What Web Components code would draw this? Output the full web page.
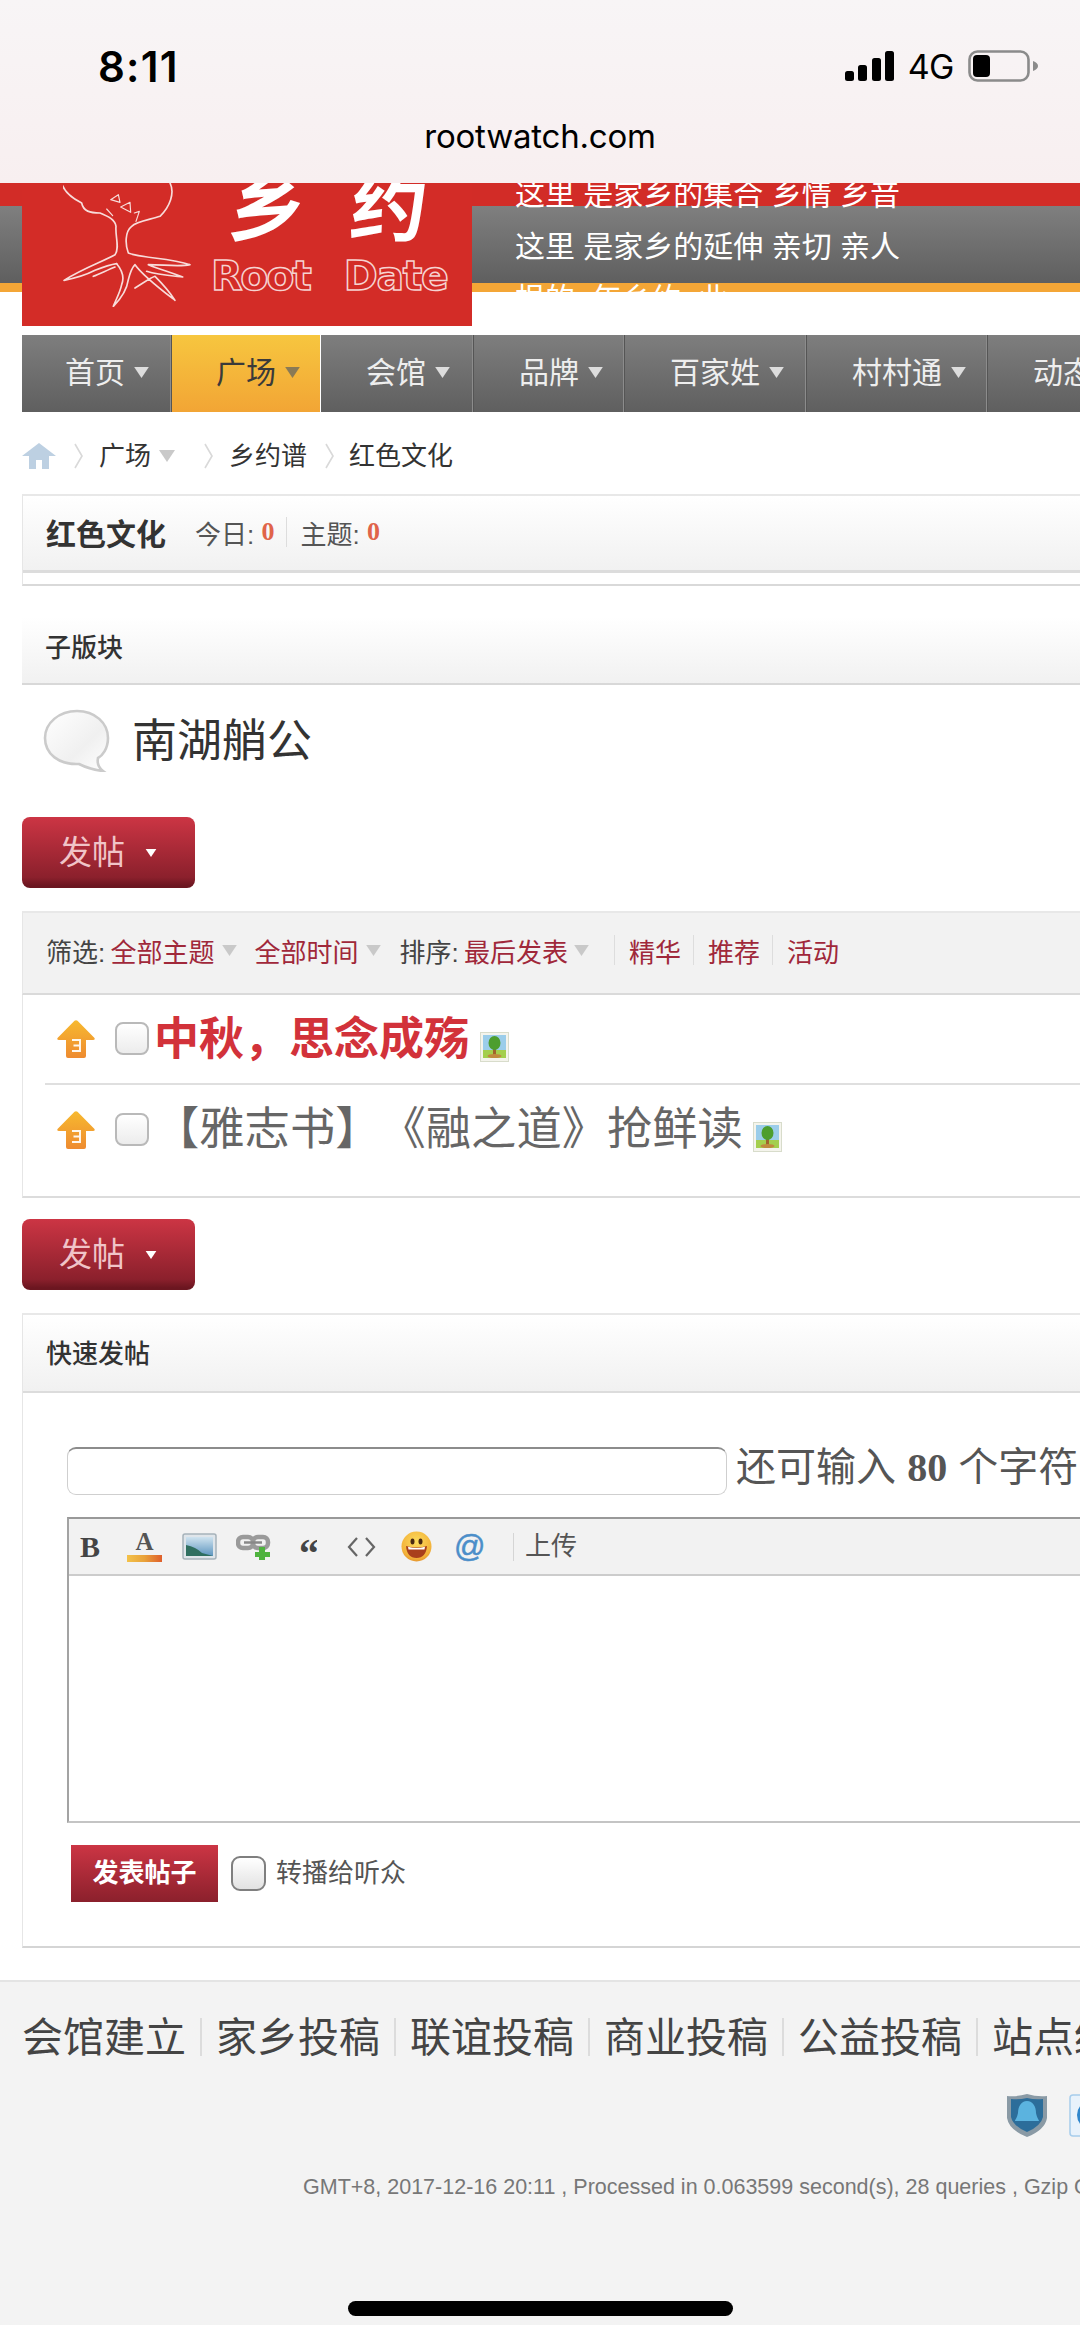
<!DOCTYPE html>
<html lang="zh">
<head>
<meta charset="utf-8">
<title>红色文化</title>
<style>
html,body{margin:0;padding:0;width:1080px;height:2339px;overflow:hidden;background:#fff}
body{font-family:"Liberation Sans","Noto Sans CJK SC",sans-serif;color:#333;text-spacing-trim:space-all}
</style>
</head>
<body>
<status-bar></status-bar>
<site-header></site-header>
<site-nav>
  <nav-item style="width:150px;padding-left:43px">首页</nav-item>
  <nav-item style="width:149px;padding-left:44px" active>广场</nav-item>
  <nav-item style="width:153px">会馆</nav-item>
  <nav-item style="width:151px">品牌</nav-item>
  <nav-item style="width:182px">百家姓</nav-item>
  <nav-item style="width:181px">村村通</nav-item>
  <nav-item style="width:150px">动态</nav-item>
</site-nav>
<bread-crumbs></bread-crumbs>
<forum-head></forum-head>
<sub-forums></sub-forums>
<post-button style="margin-top:45px"></post-button>
<thread-list></thread-list>
<post-button style="margin-top:21px"></post-button>
<quick-post></quick-post>
<site-footer></site-footer>

<script>
const CJK='"Liberation Sans","Noto Sans CJK SC",sans-serif';
function def(name,html,setup){
  customElements.define(name,class extends HTMLElement{
    constructor(){super();const s=this.attachShadow({mode:'open'});s.innerHTML=html;if(setup)setup(s,this)}
  });
}
const caret=(w,h,c,ml)=>`<svg width="${w}" height="${h}" viewBox="0 0 16 12" style="flex:none;margin-left:${ml||0}px"><path d="M0 0H16L8 12Z" fill="${c}"/></svg>`;
const chev=`<svg width="9" height="26" viewBox="0 0 9 26" style="flex:none"><path d="M1 1Q5 8 8 13Q5 18 1 25" fill="none" stroke="#d9d9d9" stroke-width="1.6"/></svg>`;
const upArrow=`<svg width="38" height="38" viewBox="0 0 38 38" style="flex:none"><defs><linearGradient id="ua" x1="0" y1="0" x2="0" y2="1"><stop offset="0" stop-color="#f7b92f"/><stop offset="1" stop-color="#ee8b30"/></linearGradient></defs><path d="M17.500 .8Q19 -.2 20.500 .8L37.500 18Q38.300 20 36 20H29V36Q29 38 27 38H11Q9 38 9 36V20H2Q-.3 20 .5 18Z" fill="url(#ua)"/><path d="M15 20H23V31H15M16.500 25.500H23" fill="none" stroke="#fff" stroke-width="1.900" opacity=".92"/></svg>`;
const picIcon=`<svg width="29" height="30" viewBox="0 0 29 30" style="flex:none"><rect x=".5" y=".5" width="28" height="29" fill="#f4f4ec" stroke="#d8dccb"/><rect x="3" y="3" width="23" height="15" fill="#9bcdea"/><rect x="3" y="18" width="23" height="8" fill="#a4cf4d"/><rect x="13" y="13" width="3" height="10" fill="#a0642c"/><ellipse cx="14.500" cy="11" rx="6" ry="7" fill="#4d9e2e"/><ellipse cx="14.500" cy="24" rx="7" ry="2" fill="#c08a3e"/></svg>`;

def('status-bar',`<style>
:host{display:block;height:183px;background:linear-gradient(#f8f5f6,#f8eff0);color:#000;font-family:"Inter","Liberation Sans",sans-serif;overflow:hidden}
.top{display:flex;align-items:center;height:40px;margin-top:46px;padding:0 42px 0 98px}
.time{font-size:42px;font-weight:600;letter-spacing:1.2px}
.right{margin-left:auto;display:flex;align-items:center;gap:14px}
.g{font-size:34px;font-weight:400;letter-spacing:-.5px}
.url{margin-top:30px;height:40px;line-height:40px;text-align:center;font-size:33px;letter-spacing:-.2px}
</style>
<div class="top"><span class="time">8:11</span><span class="right">
<svg width="49" height="30" viewBox="0 0 49 30"><rect x="0" y="20" width="9" height="10" rx="2.500"/><rect x="13" y="14" width="9" height="16" rx="2.500"/><rect x="27" y="7" width="9" height="23" rx="2.500"/><rect x="40" y="0" width="9" height="30" rx="2.500"/></svg>
<span class="g">4G</span>
<svg width="70" height="32" viewBox="0 0 70 32"><rect x="1.500" y="1.500" width="59" height="29" rx="8" fill="none" stroke="#8b8b8b" stroke-width="2.600"/><rect x="5" y="5" width="17" height="22" rx="4"/><path d="M65 11Q70 13 70 16Q70 19 65 21Z" fill="#8b8b8b"/></svg>
</span></div>
<div class="url">rootwatch.com</div>`);

def('site-header',`<style>
:host{display:flex;height:143px;overflow:hidden;padding-left:22px;font-family:${CJK};
background:linear-gradient(#d22c27 0 23px,#7f7f7f 23px,#5f5f5f 100px,#f4a636 100px,#f4a636 109px,#fff 109px)}
.logo{flex:none;width:450px;height:143px;background:#d32c27;display:flex;overflow:hidden}
.tree{flex:none;margin-left:41px;width:128px;height:124px}
.brand{margin-left:20px;color:#fff}
.cn{display:flex;gap:46px;margin:-11px 0 0 18px;font-size:76px;line-height:74px;font-weight:700;height:74px;transform:skewX(-6deg)}
.en{display:flex;gap:34px;margin-top:12px;font:700 41px/37px "DejaVu Sans",sans-serif;color:transparent;-webkit-text-stroke:1.500px #f6d3d1;letter-spacing:-2.200px}
.en span+span{letter-spacing:-1.300px}
.lines{margin:-14px 0 0 43px;font-size:30px;line-height:52px;color:#fff;white-space:pre}
</style>
<div class="logo">
<svg class="tree" viewBox="189 40 384 372" fill="none" stroke="#f8dcda" stroke-width="5" stroke-linejoin="round" stroke-linecap="round">
<path d="M185 42C195 70 225 90 245 100C250 125 270 130 300 130C325 140 345 150 348 170C345 200 360 235 345 255C310 275 250 295 192 332C230 325 260 315 285 302C310 292 330 285 350 282"/>
<path d="M510 40C525 70 510 110 480 140C450 150 410 155 395 170C375 185 375 225 385 250C420 265 510 265 570 285C540 292 490 285 445 285C480 300 520 310 548 322C510 318 470 315 440 305"/>
<path d="M350 282C365 300 375 320 365 345C360 370 345 395 340 410C355 395 380 365 385 330C390 310 395 295 405 285C430 320 490 365 525 392C505 360 475 330 465 320M405 355C430 340 450 325 465 320M280 320C300 312 325 300 345 292"/>
<path d="M332 90L355 75L360 98ZM362 112L390 98L392 128ZM320 118L338 138M403 130L418 125L408 155" stroke-width="3.500"/>
</svg>
<div class="brand"><div class="cn"><span>乡</span><span>约</span></div><div class="en"><span>Root</span><span>Date</span></div></div>
</div>
<div class="lines">这里 是家乡的集合 乡情 乡音
这里 是家乡的延伸 亲切 亲人
根的  年乡约  业</div>`);

def('site-nav',`<style>
:host{display:flex;margin:9px 0 0 22px;height:77px;overflow:hidden;width:1058px}
</style><slot></slot>`);

def('nav-item',`<style>
:host{flex:none;box-sizing:border-box;display:flex;align-items:center;padding-left:45px;padding-bottom:8px;gap:9px;height:77px;color:#eee;font:30px ${CJK};
background:linear-gradient(#7e7e7e,#5f5f5f);border-right:1px solid #555;box-shadow:inset -1px 0 0 #8c8c8c}
:host([active]){background:linear-gradient(#f7c63f,#f2a535);color:#3a3a3a;box-shadow:none;border-right-color:#fff}
.c{color:#ddd;display:flex;margin-top:6px}
:host([active]) .c{color:#8a7a55}
</style><slot></slot><span class="c"><svg width="15" height="11" viewBox="0 0 16 12"><path d="M0 0H16L8 12Z" fill="currentColor"/></svg></span>`);

def('bread-crumbs',`<style>
:host{display:flex;align-items:center;height:44px;margin:22px 0 16px 22px;font:26px/44px ${CJK};color:#333}
.g{display:flex;align-items:center}
</style>
<svg width="34" height="26" viewBox="0 0 34 26" style="flex:none"><path d="M17 0L34 13H27V26H20V17H14V26H7V13H0Z" fill="#bdd0e2"/></svg>
<span class="g" style="margin-left:18px">${chev}</span>
<span style="margin-left:16px">广场</span>
<span class="g" style="margin-left:8px">${caret(16,12,'#c9c9c9')}</span>
<span class="g" style="margin-left:29px">${chev}</span>
<span style="margin-left:16px">乡约谱</span>
<span class="g" style="margin-left:18px">${chev}</span>
<span style="margin-left:15px">红色文化</span>`);

def('forum-head',`<style>
:host{display:block;box-sizing:border-box;height:92px;margin-left:22px;border-top:2px solid #e8e8e8;border-left:1px solid #e6e6e6;border-bottom:2px solid #d9d9d9;font:26px ${CJK}}
.in{box-sizing:border-box;height:77px;border-bottom:3px solid #dcdcdc;background:linear-gradient(#fff,#f1f1f1);display:flex;align-items:center;padding:0 0 2px 23px}
b{font-size:30px;font-weight:700;color:#333}
.s{color:#555;white-space:pre}
i{font:700 26px "Liberation Serif",serif;color:#e0644a;font-style:normal}
.sep{width:1px;height:30px;background:#ddd;margin:0 13px 0 12px}
</style><div class="in"><b>红色文化</b><span class="s" style="margin-left:29px">今日: </span><i>0</i><span class="sep"></span><span class="s">主题: </span><i>0</i></div>`);

def('sub-forums',`<style>
:host{display:block;margin:31px 0 0 22px;font:26px ${CJK}}
.h{box-sizing:border-box;height:68px;background:linear-gradient(#fff,#f1f1f1);border-bottom:2px solid #d8d8d8;display:flex;align-items:center;padding:0 0 10px 23px;font-weight:500;color:#333}
.r{display:flex;align-items:center;height:63px;margin-top:24px;padding-left:21px;gap:22px;font-size:45px;color:#333}
.r span{margin-top:-7px}
</style>
<div class="h">子版块</div>
<div class="r"><svg width="67" height="63" viewBox="0 0 67 63" style="flex:none"><defs><linearGradient id="b" x1="0" y1="0" x2="1" y2="1"><stop offset="0" stop-color="#fff"/><stop offset=".6" stop-color="#f0f0f0"/><stop offset="1" stop-color="#fff"/></linearGradient></defs><path d="M34 2C52 2 65 14 65 29C65 40 59 47 55 49C54 54 56 59 60 62C50 61 42 58 36 55C16 56 2 45 2 29C2 14 16 2 34 2Z" fill="url(#b)" stroke="#cbcbcb" stroke-width="2.600"/></svg><span>南湖艄公</span></div>`);

def('post-button',`<style>
:host{display:flex;box-sizing:border-box;align-items:center;width:173px;height:71px;margin-left:22px;padding-left:37px;border-radius:8px;background:linear-gradient(#cc3544,#8b202c 85%,#6b1620 97%);color:#f0c4c8;font:33px ${CJK}}
span{margin-top:-5px}
svg{margin-left:20px}
</style><span>发帖</span><svg width="12" height="8" viewBox="0 0 16 12"><path d="M0 0H16L8 12Z" fill="#fff"/></svg>`);

def('thread-list',`<style>
:host{display:block;margin:23px 0 0 22px;font:26px ${CJK}}
.f{box-sizing:border-box;height:84px;background:#f2f2f2;border-top:2px solid #e8e8e8;border-bottom:2px solid #dadada;border-left:1px solid #e6e6e6;display:flex;align-items:center;padding:0 0 6px 23px;color:#444;white-space:pre}
a{color:#a0283a;text-decoration:none}
.sep{width:1px;height:30px;background:#ddd}
.b{border-left:1px solid #e6e6e6;border-bottom:2px solid #dcdcdc}
.row{display:flex;align-items:flex-start;margin-left:22px;padding-left:12px;white-space:nowrap}
.r1{height:90px;box-sizing:border-box;padding-top:25px;border-bottom:2px solid #dfdfdf}
.r2{height:111px;box-sizing:border-box;padding-top:26px}
input{appearance:none;-webkit-appearance:none;flex:none;width:34px;height:33px;margin:2px 0 0 20px;box-sizing:border-box;border:2px solid #b9b9b9;border-radius:8px;background:linear-gradient(#fff,#ececec)}
.t{font-size:45px;line-height:60px;margin:-10px 11px 0 5px;color:#666}
.r1 .t{font-weight:700;color:#d2323a}
.r2 .t{margin-top:-11px;margin-right:10px;font-size:45.300px}
.r1 svg:last-child{margin-top:12px}
.r2 svg:last-child{margin-top:11px}
</style>
<div class="f"><span style="margin-right:-2px">筛选: </span><a>全部主题</a>${caret(15,11,'#c9c9c9',8)}<a style="margin-left:17px">全部时间</a>${caret(15,11,'#c9c9c9',8)}<span style="margin-left:18px;margin-right:-2px">排序: </span><a>最后发表</a>${caret(15,11,'#c9c9c9',6)}<span class="sep" style="margin-left:25px"></span><a style="margin-left:14px">精华</a><span class="sep" style="margin-left:12px"></span><a style="margin-left:14px">推荐</a><span class="sep" style="margin-left:12px"></span><a style="margin-left:14px">活动</a></div>
<div class="b">
<div class="row r1">${upArrow}<input type="checkbox"><span class="t">中秋，思念成殇</span>${picIcon}</div>
<div class="row r2">${upArrow}<input type="checkbox"><span class="t">【雅志书】《融之道》抢鲜读</span>${picIcon}</div>
</div>`);

def('quick-post',`<style>
:host{display:block;box-sizing:border-box;height:635px;margin:23px 0 0 22px;border-top:2px solid #e8e8e8;border-left:1px solid #e6e6e6;border-bottom:2px solid #d5d5d5;font:26px ${CJK};color:#444}
.h{box-sizing:border-box;height:78px;background:linear-gradient(#fff,#f1f1f1);border-bottom:2px solid #dcdcdc;display:flex;align-items:center;padding:0 0 4px 23px;font-weight:500;color:#333}
.sub{display:flex;align-items:center;margin:54px 0 0 44px;height:48px;white-space:nowrap}
.in{flex:none;width:660px;height:48px;box-sizing:border-box;border:1px solid #cfcfcf;border-top:2px solid #8c8c8c;border-radius:9px;background:#fff}
.cnt{margin:-14px 0 0 9px;font-size:40px;color:#555}
.cnt b{font:700 40px "Liberation Serif",serif;color:#555}
.ed{box-sizing:border-box;margin:22px 0 0 44px;height:306px;border-top:2px solid #999;border-left:2px solid #a3a3a3;border-bottom:2px solid #c4c4c4}
.bar{box-sizing:border-box;height:57px;background:#f2f2f2;border-bottom:2px solid #ccc;display:flex;align-items:center;color:#444}
.bar>*{flex:none}
.B{font:700 30px "Liberation Serif",serif;color:#444;margin-left:11px;width:20px}
.A{margin-left:27px;width:35px;display:flex;flex-direction:column;align-items:center;font:700 25px/22px "Liberation Serif",serif;color:#555}
.A i{display:block;width:35px;height:7px;background:linear-gradient(90deg,#f3c24a,#e9a23a,#df5f2c);margin-top:2px}
.q{margin-left:28px;width:18px;font:700 40px/36px "Liberation Serif",serif;color:#444;height:22px;overflow:hidden}
.at{margin-left:22px;font:400 31px/40px "Liberation Sans",sans-serif;color:#4b8ec9;width:28px;-webkit-text-stroke:.5px #4b8ec9}
.sep2{margin-left:31px;width:1px;height:28px;background:#d5d5d5}
.up{margin:-6px 0 0 11px;color:#555}
.go{display:flex;align-items:center;margin:22px 0 0 48px;height:57px}
.btn{box-sizing:border-box;width:147px;height:57px;background:linear-gradient(#cc3544,#8b202c);color:#fff;font-weight:700;display:flex;align-items:center;justify-content:center;padding-bottom:6px}
.go input{appearance:none;-webkit-appearance:none;width:35px;height:35px;margin:0 0 0 13px;box-sizing:border-box;border:2px solid #7f7f7f;border-radius:9px;background:linear-gradient(#fff,#e2e2e2)}
.lbl{margin:-7px 0 0 10px;color:#555}
</style>
<div class="h">快速发帖</div>
<div class="sub"><span class="in"></span><span class="cnt">还可输入 <b>80</b> 个字符</span></div>
<div class="ed"><div class="bar">
<span class="B">B</span>
<span class="A">A<i></i></span>
<svg style="margin-left:20px" width="35" height="27" viewBox="0 0 35 27"><defs><linearGradient id="sky" x1="0" y1="0" x2="0" y2="1"><stop offset="0" stop-color="#cfe3ef"/><stop offset="1" stop-color="#5d95bf"/></linearGradient></defs><rect x="1" y="1" width="33" height="25" rx="2" fill="#dfe5ea" stroke="#a6b2ba" stroke-width="1.500"/><rect x="4" y="4" width="27" height="19" fill="url(#sky)"/><path d="M4 12Q14 14 20 20L31 23H4Z" fill="#2f6f60"/></svg>
<svg style="margin-left:19px" width="35" height="26" viewBox="0 0 35 26"><g fill="none" stroke="#9a9a9a" stroke-width="4.500"><rect x="2" y="3" width="15" height="11" rx="5"/><rect x="17" y="3" width="15" height="11" rx="5"/></g><path d="M8 8.500H26" stroke="#888" stroke-width="2.500"/><path d="M23 13h6v5h5v5h-5v3h-6v-3h-4v-5h4z" fill="#4fb33e"/></svg>
<span class="q">“</span>
<svg style="margin-left:30px" width="29" height="20" viewBox="0 0 29 20" fill="none" stroke="#666" stroke-width="2.200"><path d="M10 1L2 10L10 19M19 1L27 10L19 19"/></svg>
<svg style="margin-left:25px" width="31" height="31" viewBox="0 0 31 31"><defs><radialGradient id="em" cx=".5" cy=".35" r=".75"><stop offset="0" stop-color="#fcdc5c"/><stop offset=".7" stop-color="#f3b23a"/><stop offset="1" stop-color="#dd8226"/></radialGradient></defs><circle cx="15.500" cy="15.500" r="15" fill="url(#em)"/><ellipse cx="11.500" cy="10.500" rx="2" ry="3" fill="#4a2a12"/><ellipse cx="19.500" cy="10.500" rx="2" ry="3" fill="#4a2a12"/><path d="M5 15Q15.500 18 26 15Q25 27 15.500 27Q6 27 5 15Z" fill="#a93f1c"/><path d="M7 15.800Q15.500 18.300 24 15.800L23.500 18.500H7.500Z" fill="#fff"/></svg>
<span class="at">@</span>
<span class="sep2"></span>
<span class="up">上传</span>
</div></div>
<div class="go"><span class="btn">发表帖子</span><input type="checkbox"><span class="lbl">转播给听众</span></div>`);

def('site-footer',`<style>
:host{display:block;box-sizing:border-box;height:345px;margin-top:32px;border-top:2px solid #e4e4e4;background:#f3f3f3;font:41px ${CJK};color:#444;overflow:hidden}
.l{display:flex;align-items:center;height:60px;margin:25px 0 0 22px;white-space:nowrap}
.l span{margin-top:-6px}
.l i{flex:none;width:2px;height:38px;background:#dcdcdc;margin:0 14px}
.ic{display:flex;gap:22px;height:43px;margin:27px 0 0 1007px}
.sm{margin:35px 0 0 303px;font:21.500px/30px "Liberation Sans",sans-serif;color:#777;white-space:nowrap}
.home{width:385px;height:15px;margin:99px 0 0 348px;background:#000;border-radius:8px}
</style>
<div class="l"><span>会馆建立</span><i></i><span>家乡投稿</span><i></i><span>联谊投稿</span><i></i><span>商业投稿</span><i></i><span>公益投稿</span><i></i><span>站点统计</span></div>
<div class="ic">
<svg width="40" height="43" viewBox="0 0 40 43" style="flex:none"><path d="M20 0Q30 3 40 2V24Q38 36 20 43Q2 36 0 24V2Q10 3 20 0Z" fill="#8a9aa5"/><path d="M20 4Q28 6 36 5V23Q34 32 20 38Q6 32 4 23V5Q12 6 20 4Z" fill="#2c6d9a"/><path d="M20 7C26 7 29 13 29 19C30 24 32 26 32 27H8C8 26 10 24 11 19C11 13 14 7 20 7Z" fill="#5bb3df"/></svg>
<svg width="40" height="43" viewBox="0 0 40 43" style="flex:none"><rect x="1" y="1" width="44" height="41" rx="3" fill="#e8f2fb" stroke="#a7cdec" stroke-width="1.500"/><circle cx="22" cy="21" r="14" fill="#2f86cc"/></svg>
</div>
<div class="sm">GMT+8, 2017-12-16 20:11 , Processed in 0.063599 second(s), 28 queries , Gzip On.</div>
<div class="home"></div>`);
</script>
</body>
</html>
